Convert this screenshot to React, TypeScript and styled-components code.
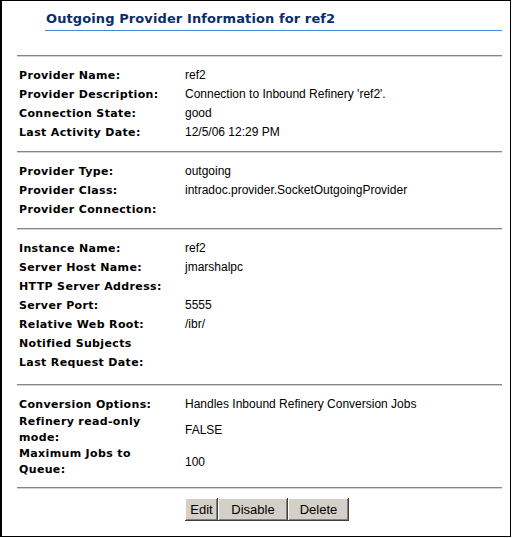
import React from 'react';
import styled, { createGlobalStyle } from 'styled-components';

const GlobalStyle = createGlobalStyle`
  html, body {
    margin: 0;
    padding: 0;
    background: #ffffff;
  }
`;

const Frame = styled.div`
  width: 511px;
  height: 537px;
  box-sizing: border-box;
  border-top: 1px solid #000;
  border-left: 2px solid #000;
  border-right: 1px solid #000;
  border-bottom: 1px solid #000;
  padding: 0 8px 0 15px;
  background: #fff;
`;

const Heading = styled.h1`
  margin: 0 0 24px 28px;
  padding: 10px 0 3px 1px;
  border-bottom: 1px solid #3d8ddb;
  font-family: 'DejaVu Sans', Verdana, sans-serif;
  font-size: 13px;
  font-weight: bold;
  line-height: 16px;
  letter-spacing: 0.1px;
  color: #0c2d6b;
`;

const Rule = styled.hr`
  margin: 0;
  height: 0;
  border: none;
  border-top: 1px solid #868686;
  border-bottom: 1px solid #d6d3ce;
`;

const Section = styled.div<{ $extra?: number }>`
  padding: 9px 0 ${({ $extra }) => 9 + ($extra ?? 0)}px 2px;
`;

const Row = styled.div`
  display: grid;
  grid-template-columns: 166px 1fr;
  align-items: center;
  min-height: 19px;
`;

const Label = styled.div`
  max-width: 156px;
  font-family: 'DejaVu Sans', Verdana, sans-serif;
  font-size: 11px;
  font-weight: bold;
  line-height: 16px;
  letter-spacing: 0.35px;
  color: #000;
`;

const Value = styled.div`
  font-family: 'Liberation Sans', Arial, sans-serif;
  font-size: 12px;
  line-height: 15px;
  color: #000;
`;

const Actions = styled.div`
  display: flex;
  padding: 9px 0 0 168px;
`;

const Button = styled.button<{ $width: number }>`
  width: ${({ $width }) => $width}px;
  height: 23px;
  margin: 0;
  padding: 0;
  border: none;
  background: #d4d0c8;
  box-shadow: inset -1px -1px #404040, inset 1px 1px #ffffff, inset -2px -2px #808080;
  font-family: 'Liberation Sans', Arial, sans-serif;
  font-size: 13px;
  color: #000;
  cursor: pointer;
`;

type Item = [string, string];

const sections: { items: Item[]; extra?: number }[] = [
  {
    items: [
      ['Provider Name:', 'ref2'],
      ['Provider Description:', "Connection to Inbound Refinery 'ref2'."],
      ['Connection State:', 'good'],
      ['Last Activity Date:', '12/5/06 12:29 PM'],
    ],
  },
  {
    items: [
      ['Provider Type:', 'outgoing'],
      ['Provider Class:', 'intradoc.provider.SocketOutgoingProvider'],
      ['Provider Connection:', ''],
    ],
  },
  {
    items: [
      ['Instance Name:', 'ref2'],
      ['Server Host Name:', 'jmarshalpc'],
      ['HTTP Server Address:', ''],
      ['Server Port:', '5555'],
      ['Relative Web Root:', '/ibr/'],
      ['Notified Subjects', ''],
      ['Last Request Date:', ''],
    ],
    extra: 3,
  },
  {
    items: [
      ['Conversion Options:', 'Handles Inbound Refinery Conversion Jobs'],
      ['Refinery read-only mode:', 'FALSE'],
      ['Maximum Jobs to Queue:', '100'],
    ],
  },
];

export default function App() {
  return (
    <>
      <GlobalStyle />
      <Frame>
        <Heading>Outgoing Provider Information for ref2</Heading>
        {sections.map((section, i) => (
          <React.Fragment key={i}>
            <Rule />
            <Section $extra={section.extra}>
              {section.items.map(([label, value]) => (
                <Row key={label}>
                  <Label>{label}</Label>
                  <Value>{value}</Value>
                </Row>
              ))}
            </Section>
          </React.Fragment>
        ))}
        <Rule />
        <Actions>
          <Button $width={33}>Edit</Button>
          <Button $width={70}>Disable</Button>
          <Button $width={61}>Delete</Button>
        </Actions>
      </Frame>
    </>
  );
}
